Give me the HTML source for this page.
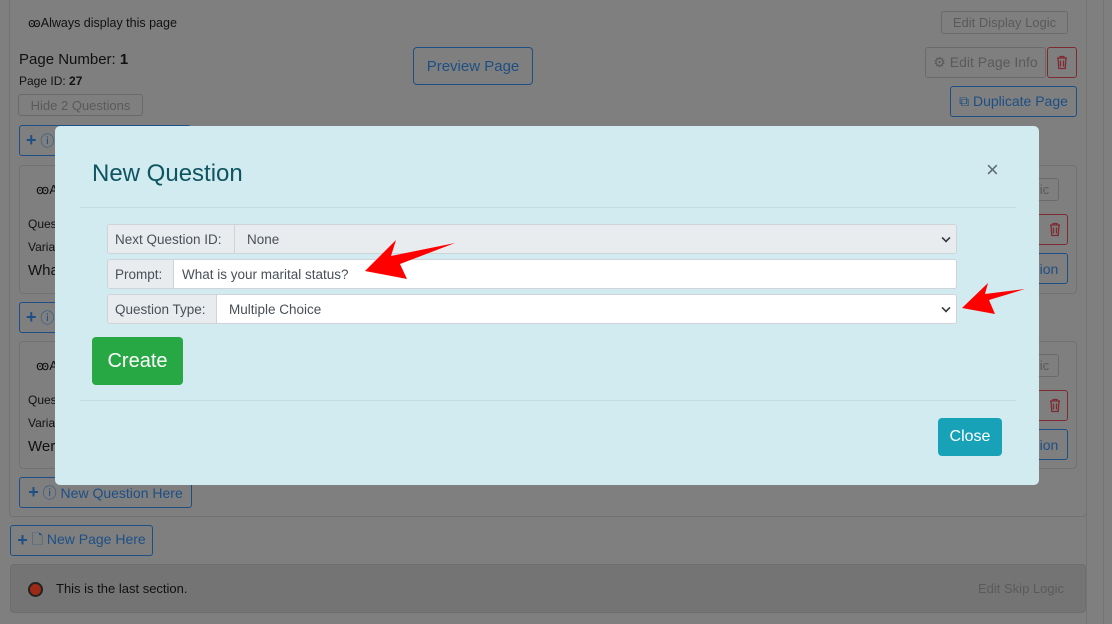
<!DOCTYPE html>
<html><head><meta charset="utf-8"><style>
*{box-sizing:border-box;margin:0;padding:0}
body{width:1112px;height:624px;overflow:hidden;background:#7f7f7f;font-family:"Liberation Sans",sans-serif;position:relative;color:#111}
.a{position:absolute}
.btn{position:absolute;border:1px solid #6a6a6a;border-radius:3px;font-size:13px;color:#5a5a5a;display:flex;align-items:center;justify-content:center;white-space:nowrap}
.blue{border-color:#1d4f85;color:#1d4f85}
.red{border-color:#7f2a31;color:#7f2a31}
.t{position:absolute;white-space:nowrap;color:#111}
.card{position:absolute;border:1px solid #727272;border-radius:4px}
.row{position:absolute;left:107px;width:850px;height:30px;border:1px solid #ced4da;border-radius:3px;display:flex;font-size:13.5px;overflow:hidden;white-space:nowrap}
.row .l{background:#e9ecef;color:#495057;padding:0 7px;display:flex;align-items:center;border-right:1px solid #ced4da;flex:none;overflow:hidden}
.row .v{flex:1;background:#fff;color:#495057;display:flex;align-items:center;padding-left:12px;position:relative}
.chev{position:absolute;right:6px;top:9px;width:8px;height:8px;border-right:2px solid #343a40;border-bottom:2px solid #343a40;transform:rotate(45deg) scale(.8)}
</style></head><body>
<svg width="0" height="0" style="position:absolute"><defs><g id="tr"><path d="M2 3h10M5 3V1.5h4V3M3 3.5l.8 10h6.4l.8-10M5.5 5.5v6M8.5 5.5v6" fill="none" stroke="#7f2a31" stroke-width="1.3"/></g></defs></svg>
<div class="card" style="left:9px;top:-5px;width:1078px;height:522px;border-color:#727272"></div>
<div class="a" style="left:1086px;top:0;width:1px;height:624px;background:#747474"></div>
<div class="a" style="left:1103px;top:0;width:1px;height:624px;background:#747474"></div>
<div class="t" style="left:28px;top:15px;font-size:12.5px">ꙭAlways display this page</div>
<div class="btn" style="left:941px;top:11px;width:127px;height:23px">Edit Display Logic</div>
<div class="t" style="left:19px;top:51px;font-size:15px">Page Number: <b>1</b></div>
<div class="t" style="left:19px;top:74px;font-size:12px">Page ID: <b>27</b></div>
<div class="btn" style="left:18px;top:94px;width:125px;height:22px">Hide 2 Questions</div>
<div class="btn blue" style="left:413px;top:47px;width:120px;height:38px;font-size:15px;border-radius:4px">Preview Page</div>
<div class="btn" style="left:925px;top:47px;width:121px;height:31px;font-size:14px">⚙ Edit Page Info</div>
<div class="btn red" style="left:1047px;top:47px;width:30px;height:31px"><svg width="14" height="15"><use href="#tr"/></svg></div>
<div class="btn blue" style="left:950px;top:86px;width:127px;height:31px;font-size:14px">⧉ Duplicate Page</div>
<div class="btn blue" style="left:19px;top:125px;width:172px;height:31px;font-size:14px;justify-content:flex-start;padding-left:6px"><b style="font-size:18px">+</b>&nbsp;ⓘ</div>
<div class="card" style="left:19px;top:165px;width:1058px;height:129px"></div>
<div class="t" style="left:36px;top:182px;font-size:13px">ꙭA</div>
<div class="t" style="left:28px;top:217px;font-size:12px">Ques</div>
<div class="t" style="left:28px;top:240px;font-size:12px">Varia</div>
<div class="t" style="left:28px;top:262px;font-size:15px">What</div>
<div class="btn" style="left:1030px;top:178px;width:29px;height:23px">ic</div>
<div class="btn red" style="left:1030px;top:214px;width:38px;height:31px"><svg width="14" height="15" style="margin-left:12px"><use href="#tr"/></svg></div>
<div class="btn blue" style="left:1030px;top:253px;width:38px;height:31px;font-size:14px">ion</div>
<div class="btn blue" style="left:19px;top:302px;width:172px;height:31px;font-size:14px;justify-content:flex-start;padding-left:6px"><b style="font-size:18px">+</b>&nbsp;ⓘ</div>
<div class="card" style="left:19px;top:341px;width:1058px;height:128px"></div>
<div class="t" style="left:36px;top:358px;font-size:13px">ꙭA</div>
<div class="t" style="left:28px;top:393px;font-size:12px">Ques</div>
<div class="t" style="left:28px;top:416px;font-size:12px">Varia</div>
<div class="t" style="left:28px;top:438px;font-size:15px">Wer</div>
<div class="btn" style="left:1030px;top:354px;width:29px;height:23px">ic</div>
<div class="btn red" style="left:1030px;top:390px;width:38px;height:31px"><svg width="14" height="15" style="margin-left:12px"><use href="#tr"/></svg></div>
<div class="btn blue" style="left:1030px;top:429px;width:38px;height:31px;font-size:14px">ion</div>
<div class="btn blue" style="left:19px;top:477px;width:173px;height:31px;font-size:14px"><b style="font-size:18px">+</b>&nbsp;ⓘ New Question Here</div>
<div class="btn blue" style="left:10px;top:525px;width:143px;height:31px;font-size:14px"><b style="font-size:18px">+</b>&nbsp;🗋 New Page Here</div>
<div class="a" style="left:10px;top:564px;width:1076px;height:49px;background:#747474;border-radius:4px;border:1px solid #6e6e6e"></div>
<div class="a" style="left:28px;top:582px;width:15px;height:15px;border-radius:50%;background:#9c2a17;border:2px solid #222"></div>
<div class="t" style="left:56px;top:581px;font-size:13px">This is the last section.</div>
<div class="t" style="left:978px;top:581px;font-size:13px;color:#5a5a5a">Edit Skip Logic</div>

<div class="a" style="left:55px;top:126px;width:984px;height:359px;background:#d1ebf0;border-radius:5px"></div>
<div class="t" style="left:92px;top:160px;font-size:24px;color:#0f5561">New Question</div>
<div class="t" style="left:986px;top:157px;font-size:22px;color:#5f6c72">×</div>
<div class="a" style="left:80px;top:207px;width:936px;height:1px;background:#c2dde3"></div>
<div class="row" style="top:224px"><div class="l" style="width:127px">Next Question ID:</div><div class="v" style="background:#e9ecef">None<span class="chev"></span></div></div>
<div class="row" style="top:259px"><div class="l" style="width:66px">Prompt:</div><div class="v" style="padding-left:8px">What is your marital status?</div></div>
<div class="row" style="top:294px"><div class="l" style="width:109px">Question Type:</div><div class="v">Multiple Choice<span class="chev"></span></div></div>
<div class="a" style="left:92px;top:337px;width:91px;height:48px;background:#28a745;border-radius:4px;color:#fff;font-size:20px;display:flex;align-items:center;justify-content:center">Create</div>
<div class="a" style="left:80px;top:400px;width:936px;height:1px;background:#c2dde3"></div>
<div class="a" style="left:938px;top:418px;width:64px;height:38px;background:#17a2b8;border-radius:4px;color:#fff;font-size:16px;display:flex;align-items:center;justify-content:center">Close</div>
<svg class="a" style="left:0;top:0" width="1112" height="624"><polygon fill="#f00" points="365,271 396,240 391,256 455,243 400,264 407,279"/><polygon fill="#f00" points="962,308 988,283 985,294 1025,289 989,300 995,314"/></svg>
</body></html>
